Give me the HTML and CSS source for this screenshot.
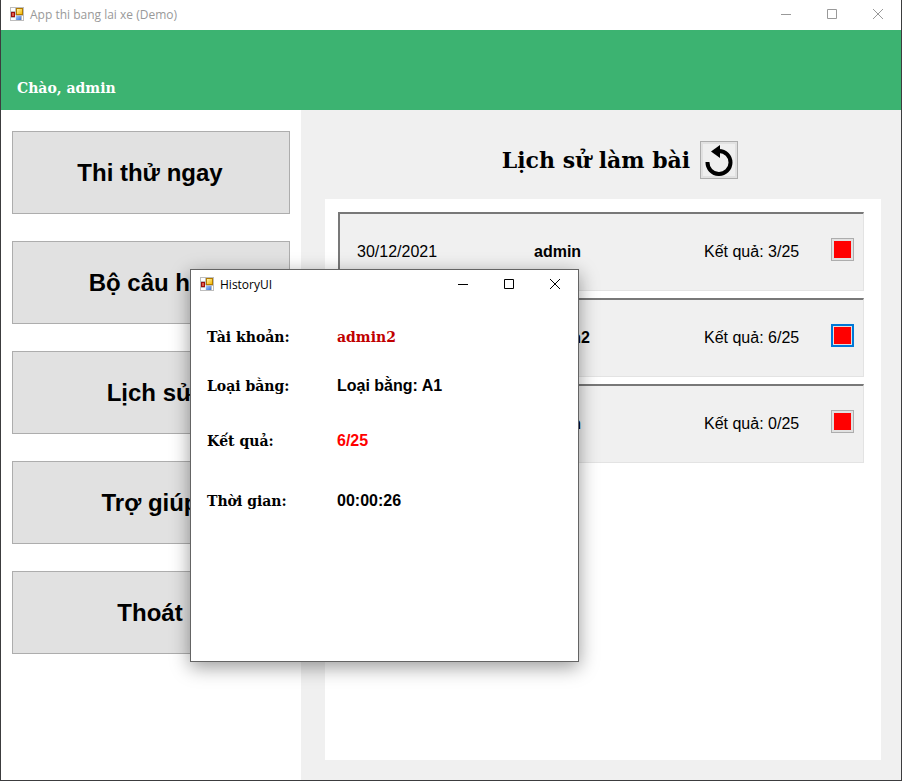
FILE: index.html
```html
<!DOCTYPE html>
<html lang="vi">
<head>
<meta charset="utf-8">
<title>App thi bang lai xe (Demo)</title>
<link rel="stylesheet" href="styles.css">
</head>
<body>
<svg class="defs" aria-hidden="true">
  <defs>
    <linearGradient id="gold" x1="0" y1="0" x2="1" y2="1"><stop offset="0" stop-color="#fff3b0"/><stop offset="1" stop-color="#f5b800"/></linearGradient>
    <linearGradient id="blue" x1="0" y1="0" x2="1" y2="1"><stop offset="0" stop-color="#a8cbff"/><stop offset="1" stop-color="#3c74dc"/></linearGradient>
    <symbol id="form-icon" viewBox="0 0 14 14">
      <path d="M0 0h14v14H0z" fill="#bdbdbd"/>
      <path d="M1 1h4v3H1zM1 11h4v2H1zM12 9h1v4h-1z" fill="#fff"/>
      <path d="M5 8h1v5H5z" fill="#eee"/>
      <path d="M1 5h4v5H1z" fill="#9c1010"/><path d="M2 6h2v3H2z" fill="#e05a48"/>
      <path d="M6 1h7v7H6z" fill="#b27b00"/><path d="M7 2h5v5H7z" fill="url(#gold)"/>
      <path d="M6 9h5v4H6z" fill="url(#blue)"/>
    </symbol>
    <symbol id="minimize" viewBox="0 0 10 10"><path d="M0 5.5h10" stroke="currentColor"/></symbol>
    <symbol id="maximize" viewBox="0 0 10 10"><path d="M.5.5h9v9h-9z" fill="none" stroke="currentColor"/></symbol>
    <symbol id="close" viewBox="0 0 10 10"><path d="M0 0l10 10M10 0L0 10" stroke="currentColor"/></symbol>
  </defs>
</svg>
<div class="window">
  <header class="titlebar titlebar-inactive">
    <svg class="app-icon"><use href="#form-icon"/></svg>
    <span class="title">App thi bang lai xe (Demo)</span>
    <button class="caption" aria-label="Minimize"><svg><use href="#minimize"/></svg></button>
    <button class="caption" aria-label="Maximize"><svg><use href="#maximize"/></svg></button>
    <button class="caption" aria-label="Close"><svg><use href="#close"/></svg></button>
  </header>
  <div class="banner">Chào, admin</div>
  <div class="content">
    <nav class="menu">
      <button>Thi thử ngay</button>
      <button>Bộ câu hỏi</button>
      <button>Lịch sử</button>
      <button>Trợ giúp</button>
      <button>Thoát</button>
    </nav>
    <main class="history">
      <div class="heading">
        <h1>Lịch sử làm bài</h1>
        <button class="reload" aria-label="Tải lại"><svg viewBox="0 0 32 32"><path d="M4.500 18A11.500 11.500 0 1 0 16 7" fill="none" stroke="#000" stroke-width="4"/><path d="M17 1v13L8 7.500z"/></svg></button>
      </div>
      <div class="list">
        <div class="entry"><span class="date">30/12/2021</span><b>admin</b><span class="result">Kết quả: 3/25</span><button class="open" aria-label="Xem 3/25"></button></div>
        <div class="entry"><span class="date"></span><b>admin2</b><span class="result">Kết quả: 6/25</span><button class="open selected" aria-label="Xem 6/25"></button></div>
        <div class="entry"><span class="date"></span><b>admin</b><span class="result">Kết quả: 0/25</span><button class="open" aria-label="Xem 0/25"></button></div>
      </div>
    </main>
  </div>
</div>
<section class="dialog" role="dialog" aria-label="HistoryUI">
  <header class="titlebar">
    <svg class="app-icon"><use href="#form-icon"/></svg>
    <span class="title">HistoryUI</span>
    <button class="caption" aria-label="Minimize"><svg><use href="#minimize"/></svg></button>
    <button class="caption" aria-label="Maximize"><svg><use href="#maximize"/></svg></button>
    <button class="caption" aria-label="Close"><svg><use href="#close"/></svg></button>
  </header>
  <dl class="details">
    <dt>Tài khoản:</dt><dd class="account">admin2</dd>
    <dt>Loại bằng:</dt><dd>Loại bằng: A1</dd>
    <dt>Kết quả:</dt><dd class="score">6/25</dd>
    <dt>Thời gian:</dt><dd>00:00:26</dd>
  </dl>
</section>
</body>
</html>
```
FILE: styles.css
```css
* { box-sizing: border-box; }
body { margin: 0; font: 16px/20px "Liberation Sans", Arial, sans-serif; color: #000; }
button { font: inherit; color: inherit; padding: 0; }
.defs { position: absolute; width: 0; height: 0; }
.window { min-height: 100vh; display: flex; flex-direction: column; border: 1px solid #3c3c3e; border-top: 0; background: #fff; }
.titlebar { display: flex; align-items: center; height: 30px; padding-left: 9px; font: 12px/16px "Open Sans", sans-serif; }
.titlebar-inactive { color: #999; }
.app-icon { width: 14px; height: 14px; margin: 0 6px 2px 0; }
.title { flex: 1; }
.caption { width: 46px; height: 30px; border: 0; padding-bottom: 2px; background: none; display: grid; place-items: center; }
.caption svg { width: 10px; height: 10px; }
.banner { height: 80px; padding: 48px 16px 0; background: #3cb371; color: #fff; font: bold 14px/20px "DejaVu Serif", serif; }
.content { flex: 1; display: flex; }
.menu { width: 300px; flex: none; display: flex; flex-direction: column; gap: 27px; padding: 21px 11px; }
.menu button { height: 83px; padding-right: 2px; border: 1px solid #adadad; background: #e1e1e1; font-weight: bold; font-size: 24px; }
.history { flex: 1; display: flex; flex-direction: column; padding: 31px 20px 20px 24px; background: #f0f0f0; }
.heading { display: flex; align-items: center; justify-content: center; gap: 10px; height: 38px; margin-bottom: 20px; padding-left: 34px; }
.heading h1 { margin: 0; font: bold 22px/30px "DejaVu Serif", serif; }
.reload { width: 38px; height: 38px; border: 1px solid #adadad; padding: 2px; background: #efefef; box-shadow: inset 0 0 0 2px #e1e1e1; }
.reload svg { display: block; width: 32px; height: 32px; }
.list { flex: 1; display: flex; flex-direction: column; gap: 7px; padding: 13px 17px 13px 13px; background: #fff; }
.entry { height: 79px; display: grid; grid-template-columns: 177px 1fr 127px 23px; align-items: center; padding: 0 9px 0 17px; background: #f0f0f0; border: 1px solid #e3e3e3; border-top: 2px solid #787878; border-left: 2px solid #787878; }
.open { width: 23px; height: 23px; margin-bottom: 6px; border: 1px solid #adadad; background: #f00; box-shadow: inset 0 0 0 2px #e1e1e1; }
.open.selected { border: 2px solid #0078d7; box-shadow: inset 0 0 0 1px #e1e1e1; }
.dialog { position: absolute; left: 190px; top: 269px; width: 389px; height: 393px; border: 1px solid #646464; background: #fff; box-shadow: 0 5px 18px rgba(0, 0, 0, .4); }
.details { display: grid; grid-template-columns: 130px 1fr; grid-template-rows: 49px 55px 60px 20px; margin: 0; padding: 27px 16px; }
.details dt, .details .account { font: bold 14px/20px "DejaVu Serif", serif; }
.details dd { margin: 0; font-weight: bold; }
.details .account { color: #c00000; }
.details .score { color: #f00; }
```
